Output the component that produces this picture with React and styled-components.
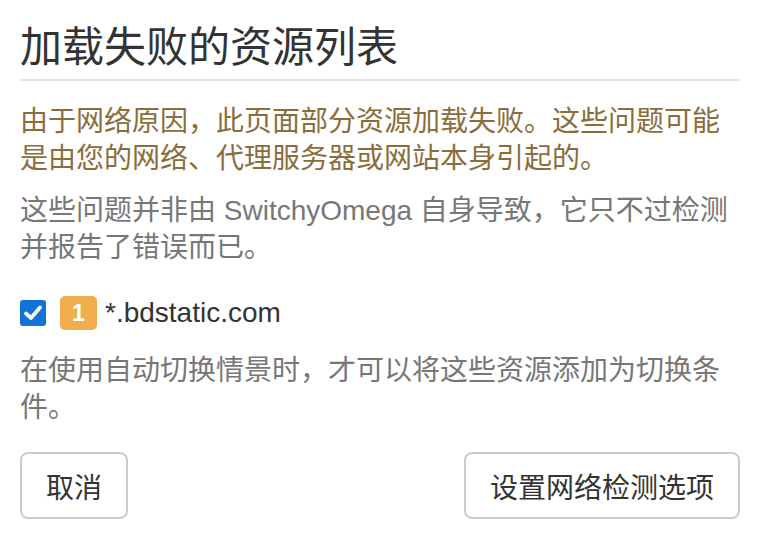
import React from 'react';
import styled, { createGlobalStyle } from 'styled-components';

const GlobalStyle = createGlobalStyle`
  html, body {
    margin: 0;
    padding: 0;
    background: #fff;
  }
  body {
    font-family: "Liberation Sans", Arial, "Noto Sans CJK SC", sans-serif;
    color: #333;
  }
`;

const Dialog = styled.div`
  width: 760px;
  height: 540px;
  box-sizing: border-box;
  padding: 0 20px;
  display: flex;
  flex-direction: column;
`;

const Title = styled.h3`
  margin: 25px 0 0;
  padding-bottom: 8px;
  font-size: 42px;
  line-height: 46px;
  font-weight: 400;
  color: #333;
  border-bottom: 2px solid #e5e5e5;
`;

const Text = styled.p`
  margin: ${p => p.$top || 0}px 0 0;
  font-size: 28px;
  line-height: 37px;
  color: ${p => (p.$warn ? '#8a6d3b' : '#777')};
`;

const ResourceRow = styled.label`
  display: flex;
  align-items: center;
  height: 40px;
  margin-top: 27px;
  font-size: 28px;
  color: #333;
`;

const Check = styled.span`
  width: 26px;
  height: 26px;
  border-radius: 3px;
  background: #0f74d6;
  display: flex;
  align-items: center;
  justify-content: center;
  margin-right: 14px;
  flex: none;
`;

const Badge = styled.span`
  width: 37px;
  height: 34px;
  border-radius: 5px;
  background: #f0ad4e;
  color: #fff;
  font-weight: 700;
  font-size: 23px;
  display: flex;
  align-items: center;
  justify-content: center;
  margin-right: 8px;
  flex: none;
`;

const Footer = styled.div`
  display: flex;
  justify-content: space-between;
  margin-top: 26px;
`;

const Button = styled.button`
  height: 67px;
  padding: 0 24px;
  box-sizing: border-box;
  border: 2px solid #ccc;
  border-radius: 8px;
  background: #fff;
  color: #333;
  font-family: "Liberation Sans", Arial, "Noto Sans CJK SC", sans-serif;
  font-size: 28px;
  cursor: pointer;
`;

export default function App() {
  return (
    <>
      <GlobalStyle />
      <Dialog>
        <Title>加载失败的资源列表</Title>
        <Text $warn $top={22}>
          由于网络原因，此页面部分资源加载失败。这些问题可能是由您的网络、代理服务器或网站本身引起的。
        </Text>
        <Text $top={15}>
          这些问题并非由 SwitchyOmega 自身导致，它只不过检测并报告了错误而已。
        </Text>
        <ResourceRow>
          <Check>
            <svg width="22" height="22" viewBox="0 0 22 22">
              <path d="M4 11.5 L9 16 L18 5.5" fill="none" stroke="#fff" strokeWidth="3.8" strokeLinecap="round" strokeLinejoin="round" />
            </svg>
          </Check>
          <Badge>1</Badge>
          <span>*.bdstatic.com</span>
        </ResourceRow>
        <Text $top={19}>
          在使用自动切换情景时，才可以将这些资源添加为切换条件。
        </Text>
        <Footer>
          <Button>取消</Button>
          <Button>设置网络检测选项</Button>
        </Footer>
      </Dialog>
    </>
  );
}
